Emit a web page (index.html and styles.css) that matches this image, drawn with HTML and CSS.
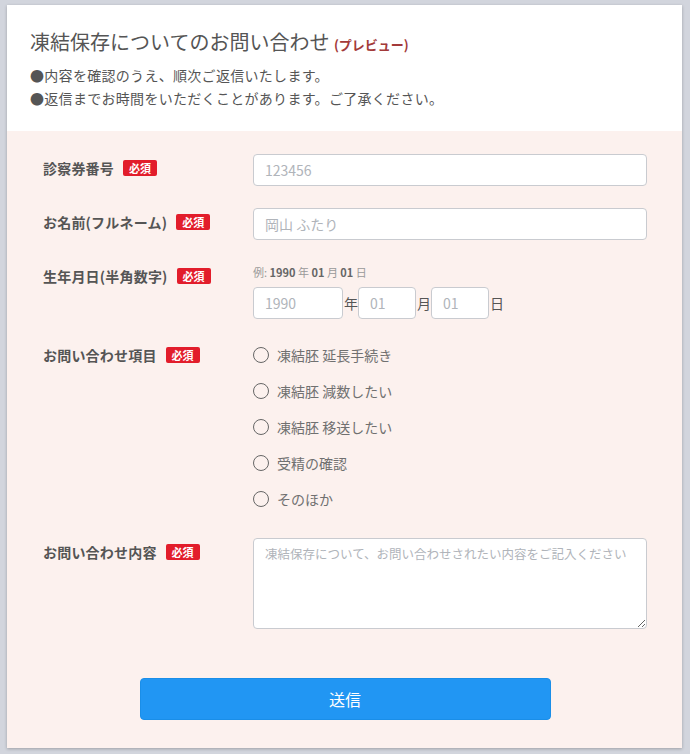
FILE: index.html
```html
<!DOCTYPE html>
<html lang="ja">
<head>
  <meta charset="utf-8">
  <title>凍結保存についてのお問い合わせ</title>
  <link rel="stylesheet" href="styles.css">
</head>
<body>
  <div class="card">
    <div class="card-head">
      <h1 class="title">凍結保存についてのお問い合わせ <span class="preview">(プレビュー)</span></h1>
      <p class="note">●内容を確認のうえ、順次ご返信いたします。</p>
      <p class="note">●返信までお時間をいただくことがあります。ご了承ください。</p>
    </div>

    <form class="form">
      <div class="row">
        <div class="label">診察券番号<span class="req">必須</span></div>
        <div class="field">
          <input type="text" class="text-input" placeholder="123456">
        </div>
      </div>

      <div class="row">
        <div class="label">お名前(フルネーム)<span class="req">必須</span></div>
        <div class="field">
          <input type="text" class="text-input" placeholder="岡山 ふたり">
        </div>
      </div>

      <div class="row">
        <div class="label">生年月日(半角数字)<span class="req">必須</span></div>
        <div class="field">
          <div class="hint">例: <b>1990</b> 年 <b>01</b> 月 <b>01</b> 日</div>
          <div class="date-row">
            <input type="text" class="text-input year" placeholder="1990"><span class="unit">年</span>
            <input type="text" class="text-input small" placeholder="01"><span class="unit">月</span>
            <input type="text" class="text-input small" placeholder="01"><span class="unit">日</span>
          </div>
        </div>
      </div>

      <div class="row row-radio">
        <div class="label">お問い合わせ項目<span class="req">必須</span></div>
        <div class="field radio-list">
          <label class="radio"><input type="radio" name="topic"><span>凍結胚 延長手続き</span></label>
          <label class="radio"><input type="radio" name="topic"><span>凍結胚 減数したい</span></label>
          <label class="radio"><input type="radio" name="topic"><span>凍結胚 移送したい</span></label>
          <label class="radio"><input type="radio" name="topic"><span>受精の確認</span></label>
          <label class="radio"><input type="radio" name="topic"><span>そのほか</span></label>
        </div>
      </div>

      <div class="row">
        <div class="label">お問い合わせ内容<span class="req">必須</span></div>
        <div class="field">
          <textarea class="text-area" placeholder="凍結保存について、お問い合わせされたい内容をご記入ください"></textarea>
        </div>
      </div>

      <div class="actions">
        <button type="button" class="submit">送信</button>
      </div>
    </form>
  </div>
</body>
</html>
```

FILE: styles.css
```css
body {
  margin: 0;
  padding: 5px 8px 8px 7px;
  background-color: #d2d5dd;
  font-family: "Noto Sans CJK JP", "Noto Sans", sans-serif;
  color: #555;
}

.card {
  background-color: #fcf1ee;
  box-shadow: 0 1px 3px rgba(0, 0, 0, 0.25);
}

.card-head {
  background-color: #fff;
  padding: 22px 23px 21px 23px;
}

.title {
  margin: 0 0 4px 0;
  font-size: 20px;
  font-weight: normal;
  line-height: 30px;
  color: #555;
}

.preview {
  font-size: 13px;
  font-weight: bold;
  color: #a33a3a;
}

.note {
  margin: 0;
  font-size: 14px;
  line-height: 23px;
  letter-spacing: 0.3px;
  color: #555;
}

.form {
  padding: 23px 35px 28px 36px;
}

.row {
  display: flex;
  margin-bottom: 22px;
}

.row-radio {
  margin-bottom: 25px;
}

.label {
  width: 210px;
  flex-shrink: 0;
  font-size: 14px;
  font-weight: bold;
  line-height: 28px;
  letter-spacing: 0.2px;
  color: #555;
}

.req {
  display: inline-block;
  margin-left: 9px;
  padding: 0 6px;
  background-color: #e21d2b;
  color: #fff;
  font-size: 11px;
  line-height: 16px;
  letter-spacing: 0;
  border-radius: 2px;
  vertical-align: 1px;
}

.field {
  flex: 1;
}

.text-input {
  box-sizing: border-box;
  width: 100%;
  height: 32px;
  padding: 0 11px;
  border: 1px solid #c9cbd0;
  border-radius: 4px;
  background-color: #fff;
  font-family: inherit;
  font-size: 14px;
  color: #555;
}

.text-input::placeholder,
.text-area::placeholder {
  color: #b0b4ba;
}

.hint {
  font-size: 11px;
  line-height: 20px;
  color: #999;
  margin-bottom: 5px;
}

.hint b {
  color: #666;
}

.date-row {
  display: flex;
  align-items: center;
}

.date-row .year {
  width: 90px;
}

.date-row .small {
  width: 58px;
}

.unit {
  font-size: 14px;
  color: #555;
  margin-left: 1px;
}

.radio-list {
  display: flex;
  flex-direction: column;
  gap: 8px;
}

.radio {
  display: flex;
  align-items: center;
  height: 28px;
  font-size: 14px;
  color: #707070;
}

.radio input {
  appearance: none;
  box-sizing: border-box;
  width: 16px;
  height: 16px;
  margin: 0 8px 0 0;
  border: 1.5px solid #666;
  border-radius: 50%;
  background: transparent;
}

.text-area {
  box-sizing: border-box;
  display: block;
  width: 100%;
  height: 91px;
  padding: 5px 11px;
  border: 1px solid #c9cbd0;
  border-radius: 4px;
  background-color: #fff;
  font-family: inherit;
  font-size: 12.5px;
  color: #555;
}

.actions {
  display: flex;
  justify-content: center;
  padding-top: 27px;
}

.submit {
  width: 411px;
  height: 42px;
  border: 1px solid #1a8ee8;
  border-radius: 4px;
  background-color: #2196f3;
  color: #fff;
  font-family: inherit;
  font-size: 16px;
  cursor: pointer;
}
```
